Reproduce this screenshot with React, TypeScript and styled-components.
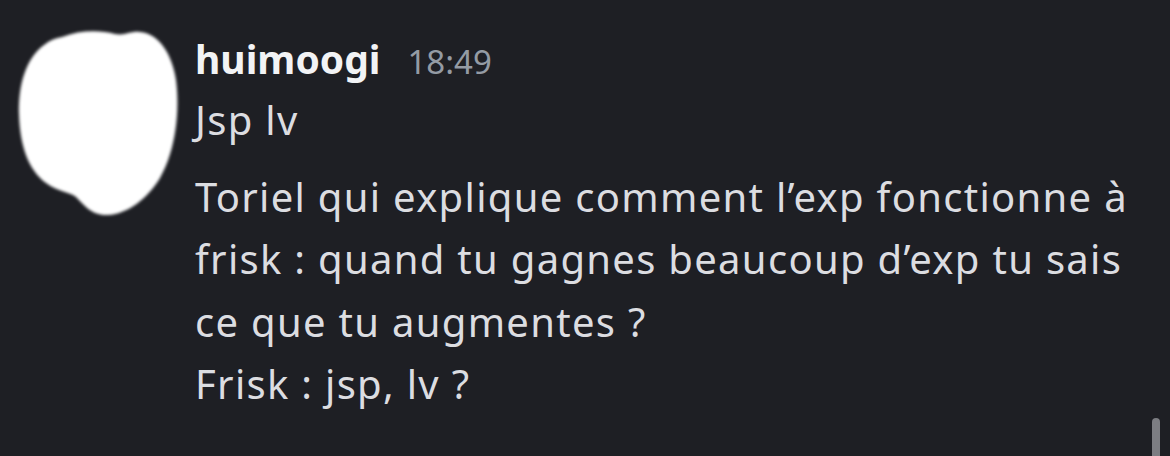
import React from 'react';
import styled, { createGlobalStyle } from 'styled-components';

const GlobalStyle = createGlobalStyle`
  html, body {
    margin: 0;
    padding: 0;
    background: #1e1f24;
  }
  body {
    font-family: "Noto Sans", "Open Sans", sans-serif;
  }
`;

const Screen = styled.div`
  position: relative;
  width: 1170px;
  height: 456px;
  overflow: hidden;
  background: #1e1f24;
`;

const MessageRow = styled.div`
  display: flex;
  align-items: flex-start;
  padding: 0 0 0 16px;
`;

const AvatarSlot = styled.div`
  width: 179px;
  height: 220px;
  flex-shrink: 0;
`;

const Content = styled.div`
  display: flex;
  flex-direction: column;
  width: 950px;
  padding-top: 31px;
`;

const Header = styled.div`
  line-height: 56px;
  height: 58px;
  white-space: nowrap;
`;

const Username = styled.span`
  font-size: 39px;
  font-weight: 700;
  color: #f2f3f5;
`;

const Timestamp = styled.span`
  font-size: 33px;
  color: #949ba4;
  margin-left: 27px;
`;

const Line = styled.div<{ $gap?: number }>`
  font-size: 40px;
  line-height: 62.5px;
  letter-spacing: 1.3px;
  color: #dcdde1;
  margin-top: ${p => p.$gap ?? 0}px;
`;

const Scrollbar = styled.div`
  position: absolute;
  right: 10px;
  bottom: -6px;
  width: 8px;
  height: 44px;
  border-radius: 4px;
  background: #7c7d82;
`;

const Avatar = () => (
  <svg width="179" height="220" viewBox="16 0 179 220">
    <defs>
      <filter id="soft" x="-10%" y="-10%" width="120%" height="120%">
        <feGaussianBlur stdDeviation="1.6" />
      </filter>
    </defs>
    <path
      filter="url(#soft)"
      fill="#ffffff"
      d="M 62 37 C 80 30, 100 30, 115 34 C 125 36, 130 31, 140 32 C 160 34, 172 55, 176 80 C 180 110, 176 150, 160 178 C 148 198, 128 214, 108 215 C 92 216, 84 205, 76 197 C 70 192, 58 192, 46 183 C 28 170, 20 145, 19 115 C 18 85, 26 58, 44 45 C 50 40, 56 38, 62 37 Z"
    />
  </svg>
);

export default function App() {
  return (
    <Screen>
      <GlobalStyle />
      <MessageRow>
        <AvatarSlot>
          <Avatar />
        </AvatarSlot>
        <Content>
          <Header>
            <Username>huimoogi</Username>
            <Timestamp>18:49</Timestamp>
          </Header>
          <Line>Jsp lv</Line>
          <Line $gap={14}>
            Toriel qui explique comment l’exp fonctionne à frisk : quand tu gagnes beaucoup d’exp tu sais ce que tu augmentes ?
          </Line>
          <Line>Frisk : jsp, lv ?</Line>
        </Content>
      </MessageRow>
      <Scrollbar />
    </Screen>
  );
}
